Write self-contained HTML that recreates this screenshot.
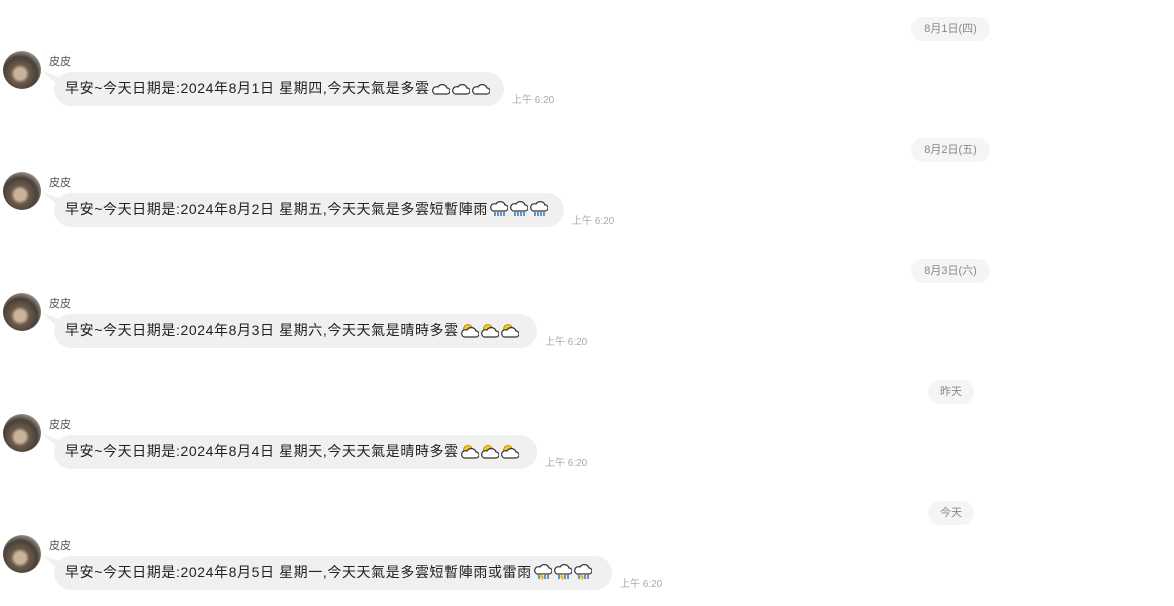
<!DOCTYPE html>
<html><head><meta charset="utf-8"><style>
body{margin:0;width:1174px;height:606px;background:#fff;position:relative;overflow:hidden;font-family:"Liberation Sans","Noto Sans CJK TC",sans-serif;}
.pill{position:absolute;height:24px;line-height:24px;border-radius:12px;background:#f5f5f5;color:#888;font-size:11px;text-align:center;}
.av{position:absolute;left:3px;width:38px;height:38px;border-radius:50%;background:radial-gradient(circle at 45% 60%,#c9b49a 0 18%,#6b5a4a 30%,#4a4038 55%,#9a948c 75%,#5c5650 100%);}
.nm{position:absolute;left:49px;font-size:11px;color:#555;}
.bb{position:absolute;left:54px;height:34px;border-radius:17px;background:#f0f0f0;color:#222;font-size:14px;letter-spacing:0.6px;line-height:33px;padding-left:11px;box-sizing:border-box;white-space:nowrap;}
.tail{position:absolute;left:42px;width:16px;height:14px;background:#f0f0f0;clip-path:polygon(0 0,100% 40%,100% 100%);}
.tm{position:absolute;font-size:10px;color:#aaa;}
svg{vertical-align:-3px;margin-left:2px}
</style></head><body>
<svg width="0" height="0" style="position:absolute"><defs>
<symbol id="c" viewBox="0 0 18 14"><path d="M3 12h12a3 3 0 0 0 0-6a5 5 0 0 0-9-1a3.5 3.5 0 0 0-3 7z" fill="#fff" stroke="#333" stroke-width="1.2"/></symbol>
<symbol id="s" viewBox="0 0 18 14"><circle cx="7" cy="5" r="4.5" fill="#f5c518" stroke="#b08000" stroke-width=".8"/><path d="M3 13h12a3 3 0 0 0 0-6a5 5 0 0 0-9-1a3.5 3.5 0 0 0-3 7z" fill="#fff" stroke="#333" stroke-width="1.2"/></symbol>
<symbol id="r" viewBox="0 0 18 16"><path d="M3 10h12a3 3 0 0 0 0-6a5 5 0 0 0-9-1a3.5 3.5 0 0 0-3 7z" fill="#fff" stroke="#333" stroke-width="1.2"/><path d="M5 11v4M8 11v4M11 11v4M14 11v4" stroke="#2a6fb0" stroke-width="1.4"/></symbol>
<symbol id="t" viewBox="0 0 18 16"><path d="M3 10h12a3 3 0 0 0 0-6a5 5 0 0 0-9-1a3.5 3.5 0 0 0-3 7z" fill="#fff" stroke="#333" stroke-width="1.2"/><path d="M5 11v4M11 11v4M14 11v4" stroke="#2a6fb0" stroke-width="1.4"/><path d="M9 10l-2 3h2l-1 3" stroke="#e8b000" stroke-width="1.3" fill="none"/></symbol>
</defs></svg>

<div class="pill" style="left:911px;top:17px;width:79px">8月1日(四)</div>
<div class="av" style="top:51px"></div><div class="nm" style="top:53px">皮皮</div>
<div class="tail" style="top:71px"></div>
<div class="bb" style="top:72px;width:450px">早安~今天日期是:2024年8月1日 星期四,今天天氣是多雲<svg width="18" height="14"><use href="#c"/></svg><svg width="18" height="14"><use href="#c"/></svg><svg width="18" height="14"><use href="#c"/></svg></div>
<div class="tm" style="left:512px;top:91px">上午 6:20</div>

<div class="pill" style="left:911px;top:138px;width:79px">8月2日(五)</div>
<div class="av" style="top:172px"></div><div class="nm" style="top:174px">皮皮</div>
<div class="tail" style="top:192px"></div>
<div class="bb" style="top:193px;width:510px">早安~今天日期是:2024年8月2日 星期五,今天天氣是多雲短暫陣雨<svg width="18" height="16"><use href="#r"/></svg><svg width="18" height="16"><use href="#r"/></svg><svg width="18" height="16"><use href="#r"/></svg></div>
<div class="tm" style="left:572px;top:212px">上午 6:20</div>

<div class="pill" style="left:911px;top:259px;width:79px">8月3日(六)</div>
<div class="av" style="top:293px"></div><div class="nm" style="top:295px">皮皮</div>
<div class="tail" style="top:313px"></div>
<div class="bb" style="top:314px;width:483px">早安~今天日期是:2024年8月3日 星期六,今天天氣是晴時多雲<svg width="18" height="14"><use href="#s"/></svg><svg width="18" height="14"><use href="#s"/></svg><svg width="18" height="14"><use href="#s"/></svg></div>
<div class="tm" style="left:545px;top:333px">上午 6:20</div>

<div class="pill" style="left:928px;top:380px;width:46px">昨天</div>
<div class="av" style="top:414px"></div><div class="nm" style="top:416px">皮皮</div>
<div class="tail" style="top:434px"></div>
<div class="bb" style="top:435px;width:483px">早安~今天日期是:2024年8月4日 星期天,今天天氣是晴時多雲<svg width="18" height="14"><use href="#s"/></svg><svg width="18" height="14"><use href="#s"/></svg><svg width="18" height="14"><use href="#s"/></svg></div>
<div class="tm" style="left:545px;top:454px">上午 6:20</div>

<div class="pill" style="left:928px;top:501px;width:46px">今天</div>
<div class="av" style="top:535px"></div><div class="nm" style="top:537px">皮皮</div>
<div class="tail" style="top:555px"></div>
<div class="bb" style="top:556px;width:558px">早安~今天日期是:2024年8月5日 星期一,今天天氣是多雲短暫陣雨或雷雨<svg width="18" height="16"><use href="#t"/></svg><svg width="18" height="16"><use href="#t"/></svg><svg width="18" height="16"><use href="#t"/></svg></div>
<div class="tm" style="left:620px;top:575px">上午 6:20</div>
</body></html>
